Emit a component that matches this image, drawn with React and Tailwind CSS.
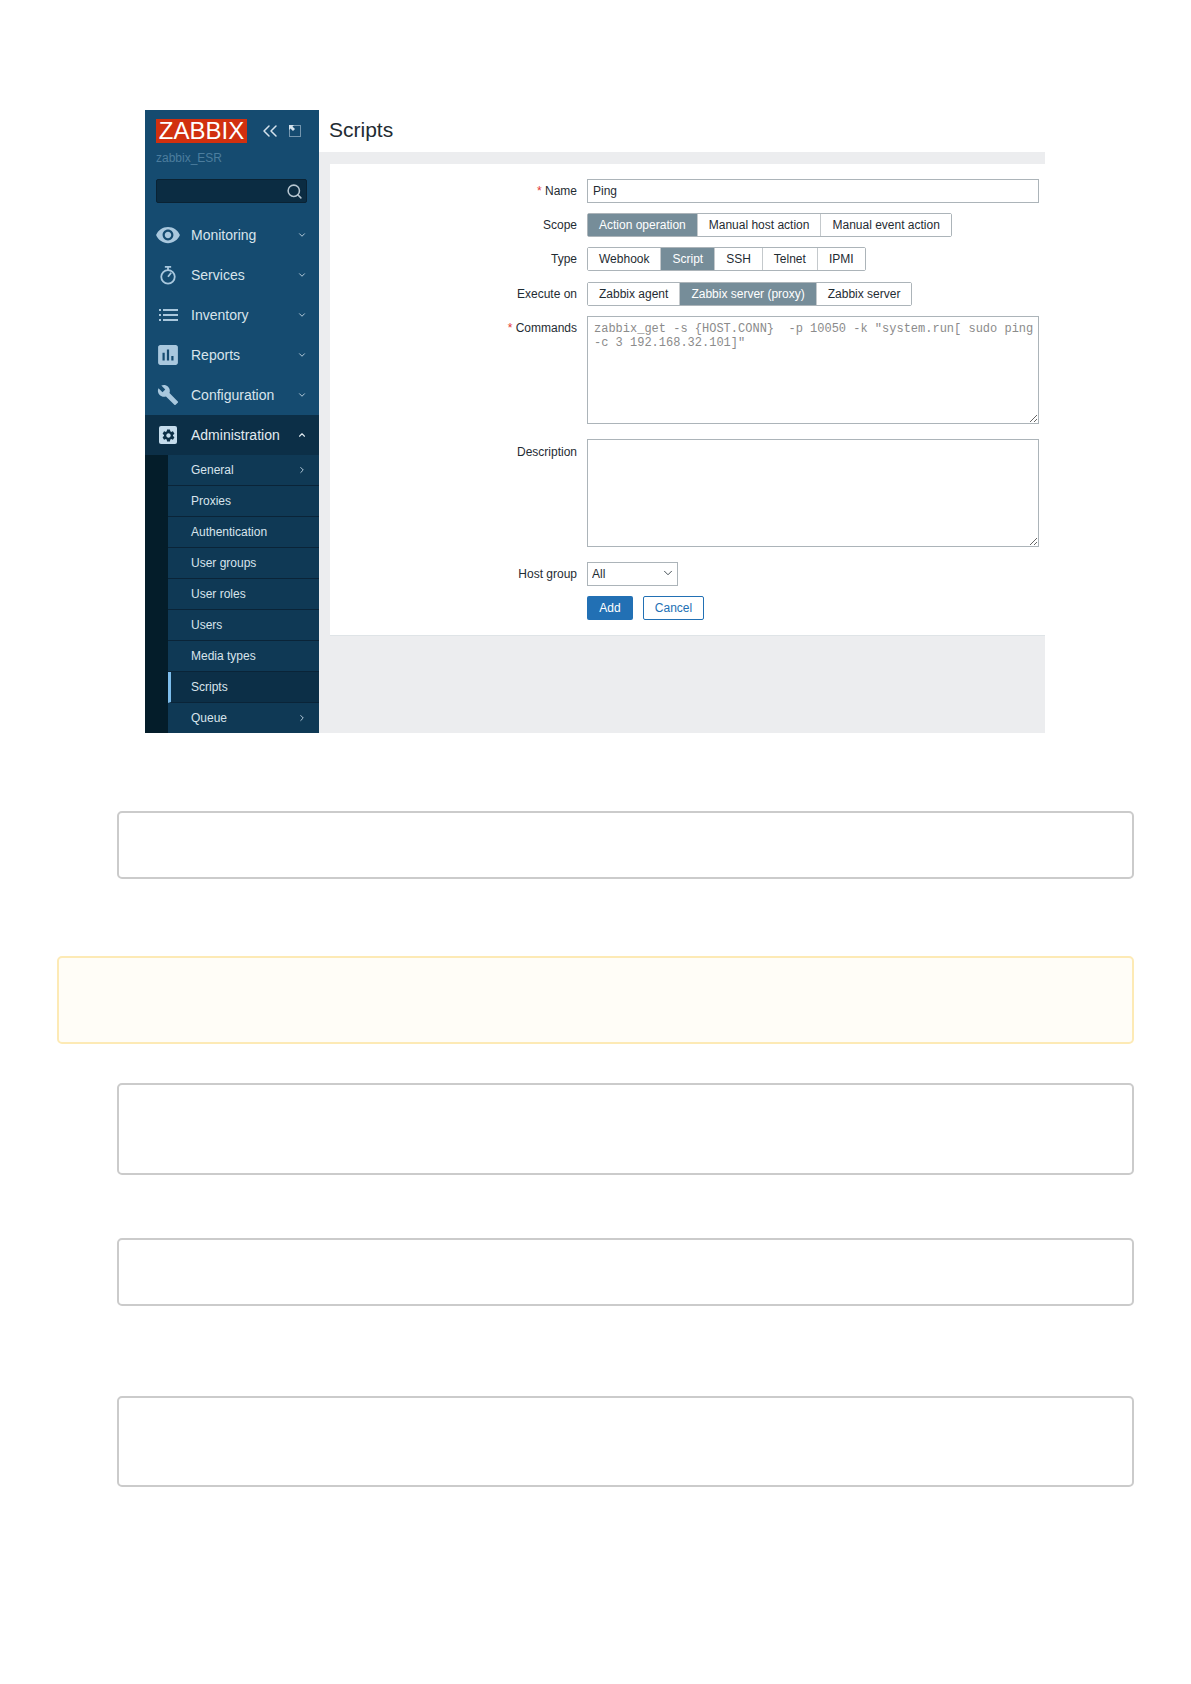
import React from 'react';
import { ChevronDown, ChevronUp, ChevronRight, ChevronsLeft, Search } from 'lucide-react';
import { MdVisibility, MdAssessment, MdBuild, MdSettings } from 'react-icons/md';

const StopwatchIcon = () => (
  <svg width="18" height="20" viewBox="0 0 20 22" fill="none" stroke="currentColor" strokeWidth="2">
    <circle cx="10" cy="13" r="7.5" />
    <path d="M6.5 2h7M10 2v3.5M10 13l3.5-4.5" />
  </svg>
);

const ListIcon = () => (
  <svg width="19" height="12" viewBox="0 0 19 12" fill="currentColor">
    <rect x="0" y="0" width="2" height="2" />
    <rect x="0" y="5" width="2" height="2" />
    <rect x="0" y="10" width="2" height="2" />
    <rect x="4" y="0" width="15" height="2" />
    <rect x="4" y="5" width="15" height="2" />
    <rect x="4" y="10" width="15" height="2" />
  </svg>
);

const mainMenu = [
  { label: 'Monitoring', icon: <MdVisibility size={26} /> },
  { label: 'Services', icon: <StopwatchIcon /> },
  { label: 'Inventory', icon: <ListIcon /> },
  { label: 'Reports', icon: <MdAssessment size={22} className="scale-[1.2]" /> },
  { label: 'Configuration', icon: <MdBuild size={22} /> },
];

const subMenu = [
  { label: 'General', arrow: true },
  { label: 'Proxies' },
  { label: 'Authentication' },
  { label: 'User groups' },
  { label: 'User roles' },
  { label: 'Users' },
  { label: 'Media types' },
  { label: 'Scripts', active: true },
  { label: 'Queue', arrow: true },
];

const Sidebar = () => (
  <div className="w-[174px] h-full flex flex-col bg-[#154b70] overflow-hidden shrink-0">
    {/* logo */}
    <div className="flex items-center pl-[11px] pt-[9px]">
      <div className="w-[91px] h-[24px] bg-[#d1300f] text-white text-[24px] leading-[24px] text-center">ZABBIX</div>
      <ChevronsLeft size={24} strokeWidth={1.5} className="ml-[11px] text-[#d4e2ec]" />
      <svg width="12" height="12" viewBox="0 0 12 12" className="ml-[7px] text-[#d4e2ec]">
        <rect x="0.5" y="0.5" width="11" height="11" fill="none" stroke="currentColor" strokeDasharray="1 1" />
        <path d="M0 0h5L3.5 1.5 6 4 4 6 1.5 3.5 0 5z" fill="currentColor" />
      </svg>
    </div>
    <div className="pl-[11px] mt-[7px] text-[12px] leading-[16px] text-[#4c7d9e]">zabbix_ESR</div>
    <div className="ml-[11px] w-[151px] mt-[13px] h-[24px] rounded-[2px] border border-[#0a2233] bg-[#0b2c42] flex items-center justify-end pr-[3px] shrink-0">
      <Search size={17} strokeWidth={2.2} className="text-[#b6c6d1]" />
    </div>
    {/* menu */}
    <div className="mt-[12px]">
      {mainMenu.map((item) => (
        <div key={item.label} className="h-[40px] flex items-center text-[14px] text-[#d8e4ec]">
          <div className="w-[46px] flex justify-center text-[#a9c8de]">{item.icon}</div>
          <div className="flex-1">{item.label}</div>
          <ChevronDown size={10} strokeWidth={2.4} className="mr-[12px] text-[#b4cad9]" />
        </div>
      ))}
      <div className="h-[40px] flex items-center text-[14px] text-[#e2ebf1] bg-[#0c2f47]">
        <div className="w-[46px] flex justify-center">
          <div className="w-[18px] h-[18px] rounded-[2px] bg-[#c5dcec] flex items-center justify-center text-[#0c2f47]">
            <MdSettings size={15} />
          </div>
        </div>
        <div className="flex-1">Administration</div>
        <ChevronUp size={10} strokeWidth={2.6} className="mr-[12px] text-[#e2ebf1]" />
      </div>
    </div>
    {/* submenu */}
    <div className="flex-1 flex bg-[#041d2a]">
      <div className="ml-[23px] flex-1">
        {subMenu.map((item) => (
          <div
            key={item.label}
            className={`h-[31px] flex items-center text-[12px] text-[#d8e4ec] border-b border-[#0a2438] ${
              item.active ? 'bg-[#0c2f47] border-l-[3px] border-l-[#7dbdec] pl-[20px]' : 'bg-[#0f3955] pl-[23px]'
            }`}
          >
            <div className="flex-1">{item.label}</div>
            {item.arrow && <ChevronRight size={10} strokeWidth={2.4} className="mr-[12px] text-[#b4cad9]" />}
          </div>
        ))}
      </div>
    </div>
  </div>
);

const Segmented = ({ options, selected }) => (
  <div className="flex h-[24px] border border-[#acb4b9] rounded-[2px] w-fit">
    {options.map((opt, i) => (
      <div
        key={opt}
        className={`px-[11px] flex items-center text-[12px] ${i > 0 ? 'border-l border-[#c4c9cc]' : ''} ${
          opt === selected ? 'bg-[#768d99] text-white' : 'bg-white text-[#1f2c33]'
        }`}
      >
        {opt}
      </div>
    ))}
  </div>
);

const Row = ({ label, required, className = '', labelClass = 'leading-[24px]', children }) => (
  <div className={`flex ${className}`}>
    <div className={`w-[257px] pr-[10px] text-right text-[12px] text-[#1f2c33] ${labelClass}`}>
      {required && <span className="text-[#e33734]">* </span>}
      {label}
    </div>
    <div className="flex-1">{children}</div>
  </div>
);

const ScriptForm = () => (
  <div className="flex-1 flex flex-col bg-[#ecedef]">
    <div className="h-[42px] bg-white pl-[10px] pb-[2px] flex items-center text-[21px] text-[#1f2c33]">Scripts</div>
    <div className="h-[12px]" />
    <div className="ml-[11px] h-[472px] bg-white border-b border-[#dfe4e7] pt-[14px] pr-[6px]">
      <Row label="Name" required labelClass="leading-[24px] pt-[1px]">
        <input
          readOnly
          value="Ping"
          className="w-full h-[24px] border border-[#acb4b9] px-[5px] text-[12px] text-[#1f2c33] outline-none"
        />
      </Row>
      <Row label="Scope" className="mt-[10px]">
        <Segmented options={['Action operation', 'Manual host action', 'Manual event action']} selected="Action operation" />
      </Row>
      <Row label="Type" className="mt-[10px]">
        <Segmented options={['Webhook', 'Script', 'SSH', 'Telnet', 'IPMI']} selected="Script" />
      </Row>
      <Row label="Execute on" className="mt-[11px]">
        <Segmented options={['Zabbix agent', 'Zabbix server (proxy)', 'Zabbix server']} selected="Zabbix server (proxy)" />
      </Row>
      <Row label="Commands" required labelClass="pt-[3px]" className="mt-[10px]">
        <textarea
          readOnly
          defaultValue={'zabbix_get -s {HOST.CONN}  -p 10050 -k "system.run[ sudo ping -c 3 192.168.32.101]"'}
          className="block w-full h-[108px] border border-[#acb4b9] pl-[6px] pr-[2px] py-[5px] text-[12px] leading-[14px] text-[#8b8b8b] outline-none"
          style={{ fontFamily: '"Liberation Mono", monospace' }}
        />
      </Row>
      <Row label="Description" labelClass="pt-[4px]" className="mt-[15px]">
        <textarea readOnly className="block w-full h-[108px] border border-[#acb4b9] outline-none" />
      </Row>
      <Row label="Host group" className="mt-[15px]">
        <div className="relative w-[91px]">
          <select className="block appearance-none w-full h-[24px] border border-[#acb4b9] bg-white text-[12px] text-[#1f2c33] pl-[4px] outline-none">
            <option>All</option>
          </select>
          <ChevronDown size={14} strokeWidth={1.4} className="absolute right-[3px] top-[4px] text-[#1f2c33] pointer-events-none" />
        </div>
      </Row>
      <div className="flex ml-[257px] mt-[10px] gap-[10px]">
        <button className="w-[46px] h-[24px] rounded-[2px] bg-[#2270b4] text-white text-[12px]">Add</button>
        <button className="w-[61px] h-[24px] rounded-[2px] border border-[#2270b4] bg-white text-[#2270b4] text-[12px]">Cancel</button>
      </div>
    </div>
    <div className="flex-1" />
  </div>
);

const Note = ({ className = '' }) => (
  <div className={`ml-[117px] w-[1017px] border-2 border-[#cbcbcb] rounded-[5px] bg-white ${className}`} />
);

export default function App() {
  return (
    <div className="w-[1191px] min-h-[1684px] bg-white pt-[110px]" style={{ fontFamily: '"Liberation Sans", Arial, sans-serif' }}>
      <div className="ml-[145px] w-[900px] h-[623px] flex">
        <Sidebar />
        <ScriptForm />
      </div>
      <Note className="mt-[78px] h-[68px]" />
      <div className="ml-[57px] mt-[77px] w-[1077px] h-[88px] border-2 border-[#fdeab5] rounded-[5px] bg-[#fffdf7]" />
      <Note className="mt-[39px] h-[92px]" />
      <Note className="mt-[63px] h-[68px]" />
      <Note className="mt-[90px] h-[91px]" />
    </div>
  );
}
